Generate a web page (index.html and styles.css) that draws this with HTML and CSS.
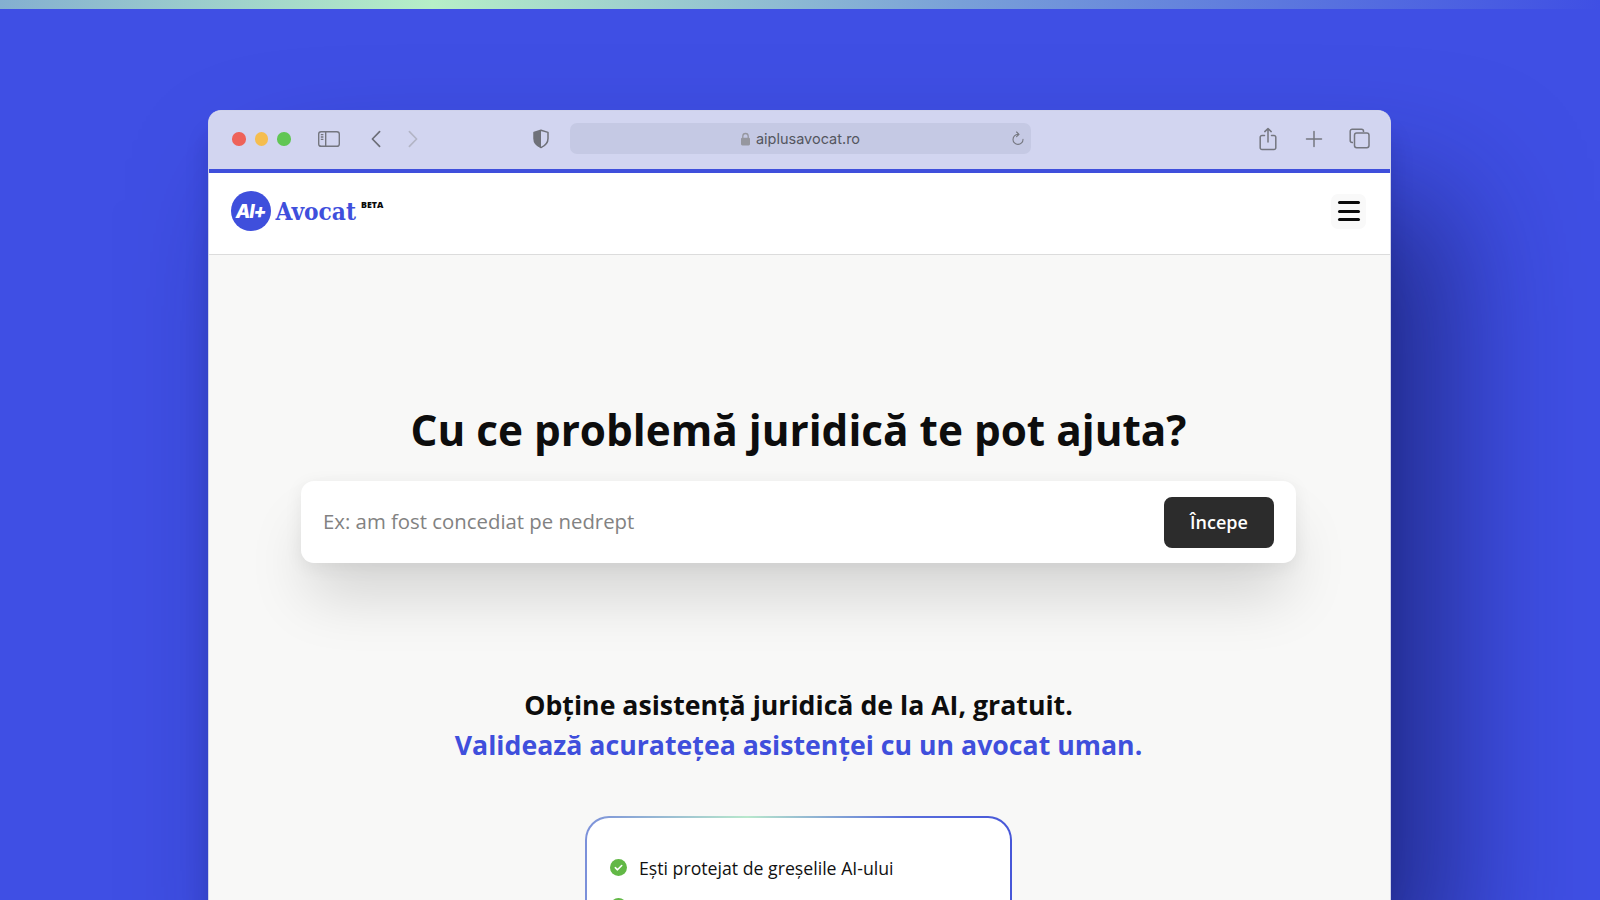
FILE: index.html
```html
<!DOCTYPE html>
<html lang="ro">
<head>
<meta charset="utf-8">
<title>AI+ Avocat</title>
<link rel="stylesheet" href="styles.css">
</head>
<body>
<div class="topbar"></div>
<div class="window">
  <div class="chrome">
    <div class="lights"><span class="dot red"></span><span class="dot yellow"></span><span class="dot green"></span></div>
    <svg class="ic sidebar" width="24" height="18" viewBox="0 0 24 18" fill="none" stroke="#74767f" stroke-width="1.4"><rect x="1.7" y="1.7" width="20.6" height="14.6" rx="2.4"/><path d="M8.7 1.7v14.6M3.8 4.6h2.6M3.8 7h2.6M3.8 9.4h2.6" /></svg>
    <svg class="ic back" width="12" height="18" viewBox="0 0 12 18" fill="none" stroke="#6c6e78" stroke-width="1.7" stroke-linecap="round" stroke-linejoin="round"><path d="M9.6 1.6 2.4 9l7.2 7.4"/></svg>
    <svg class="ic forward" width="12" height="18" viewBox="0 0 12 18" fill="none" stroke="#b3b5c6" stroke-width="1.7" stroke-linecap="round" stroke-linejoin="round"><path d="M2.4 1.6 9.6 9l-7.2 7.4"/></svg>
    <svg class="ic shield" width="18" height="20" viewBox="0 0 18 20"><path d="M9 1.2 2 3.4v6.200c0 4.200 3 7.300 7 9 4-1.700 7-4.800 7-9V3.400z" fill="none" stroke="#6f7179" stroke-width="1.500" stroke-linejoin="round"/><path d="M9 1.200 2 3.400v6.200c0 4.200 3 7.300 7 9z" fill="#6f7179"/></svg>
    <div class="url">
      <svg class="lock" width="11" height="14" viewBox="0 0 11 14"><path d="M2.800 6V4.200a2.700 2.700 0 0 1 5.400 0V6" fill="none" stroke="#96979f" stroke-width="1.300"/><rect x="1" y="5.800" width="9" height="7.600" rx="1.300" fill="#96979f"/></svg>
      <span class="url-text">aiplusavocat.ro</span>
      <svg class="reload" width="14" height="16" viewBox="0 0 14 16" fill="none" stroke="#74767f" stroke-width="1.100" stroke-linecap="round" stroke-linejoin="round"><path d="M7 3.400a5 5 0 1 0 5 5"/><path d="M5.600 1 8 3.400 5.600 5.600"/></svg>
    </div>
    <svg class="ic share" width="18" height="24" viewBox="0 0 18 24" fill="none" stroke="#74767f" stroke-width="1.500" stroke-linecap="round" stroke-linejoin="round"><path d="M5.500 8.500H3a1.800 1.800 0 0 0-1.800 1.800v10.400A1.800 1.800 0 0 0 3 22.500h12a1.800 1.800 0 0 0 1.800-1.800V10.300A1.800 1.800 0 0 0 15 8.500h-2.500"/><path d="M9 15V1.500M5.800 4.600 9 1.500l3.200 3.100"/></svg>
    <svg class="ic plus" width="18" height="18" viewBox="0 0 18 18" fill="none" stroke="#74767f" stroke-width="1.500" stroke-linecap="round"><path d="M9 1.500v15M1.500 9h15"/></svg>
    <svg class="ic tabs" width="21" height="21" viewBox="0 0 21 21" fill="none" stroke="#74767f" stroke-width="1.500"><path d="M4 14.500H3.200A2 2 0 0 1 1.200 12.500V3.200a2 2 0 0 1 2-2h9.300a2 2 0 0 1 2 2V4"/><rect x="5.500" y="5" width="14.500" height="14.800" rx="2.200"/></svg>
  </div>
  <div class="accent"></div>
  <header class="header">
    <div class="brand">
      <span class="logo-mark">AI+</span>
      <span class="logo-name">Avocat</span>
      <sup class="beta">BETA</sup>
    </div>
    <button class="menu" aria-label="Meniu"><span></span><span></span><span></span></button>
  </header>
  <main class="main">
    <h1 class="title">Cu ce problemă juridică te pot ajuta?</h1>
    <div class="search">
      <span class="placeholder">Ex: am fost concediat pe nedrept</span>
      <button class="start">Începe</button>
    </div>
    <h2 class="lead">Obține asistență juridică de la AI, gratuit.<br><span class="lead-blue">Validează acuratețea asistenței cu un avocat uman.</span></h2>
    <div class="card">
      <ul class="list">
        <li class="item"><svg class="check" width="17" height="17" viewBox="0 0 17 17"><circle cx="8.500" cy="8.500" r="8.500" fill="#62b846"/><path d="M5.300 8.700 7.500 10.800 11.700 6.500" fill="none" stroke="#fff" stroke-width="1.600" stroke-linecap="round" stroke-linejoin="round"/></svg>Ești protejat de greșelile AI-ului</li>
        <li class="item"><svg class="check" width="17" height="17" viewBox="0 0 17 17"><circle cx="8.500" cy="8.500" r="8.500" fill="#62b846"/></svg></li>
      </ul>
    </div>
  </main>
</div>
</body>
</html>
```

FILE: styles.css
```css
* { box-sizing: border-box; }
html, body { margin: 0; height: 100%; }
body {
  height: 900px;
  overflow: hidden;
  background: #3f4fe4;
  font-family: "Open Sans", sans-serif;
  color: #0d0d0d;
}
.topbar {
  height: 9px;
  background: linear-gradient(90deg, #84afd0 0%, #b6efc7 27%, #79a0d8 60%, #3f4fe4 100%);
}
.window {
  width: 1183px;
  height: 791px;
  margin: 100.500px 0 0 208px;
  border: 1.500px solid #cfd2ea;
  border-bottom: 0;
  border-radius: 13px 13px 0 0;
  background: #f8f8f7;
  box-shadow: 60px 90px 130px rgba(18, 24, 90, 0.62), 0 24px 22px rgba(18, 24, 90, 0.2);
  overflow: hidden;
}
.chrome {
  display: flex;
  align-items: center;
  height: 58px;
  padding: 0 0 1.500px 23px;
  background: #d2d5f0;
}
.lights { display: flex; gap: 9px; }
.dot { width: 13.500px; height: 13.500px; border-radius: 50%; }
.red { background: #ee6259; }
.yellow { background: #f5bd4f; }
.green { background: #61c654; }
.ic { flex: none; }
.sidebar { margin-left: 26.500px; }
.back { margin-left: 28.500px; }
.forward { margin-left: 25px; }
.shield { margin-left: 113px; }
.url {
  display: flex;
  align-items: center;
  justify-content: center;
  position: relative;
  width: 461px;
  height: 31px;
  margin-left: 20px;
  border-radius: 7px;
  background: #c5c9e4;
  font-family: Inter, sans-serif;
  font-size: 14.500px;
  color: #54565f;
}
.lock { margin-right: 5px; }
.reload { position: absolute; right: 6px; top: 8px; }
.share { margin-left: 228px; }
.plus { margin-left: 28px; }
.tabs { margin-left: 26px; }
.accent { height: 4px; background: #3f4fdc; }
.header {
  display: flex;
  align-items: center;
  justify-content: space-between;
  height: 82px;
  padding: 0 24px 4px 21.500px;
  background: #fff;
  border-bottom: 1px solid #dcdcdc;
}
.brand { display: flex; align-items: center; }
.logo-mark {
  display: flex;
  align-items: center;
  justify-content: center;
  width: 40px;
  height: 40px;
  border-radius: 50%;
  background: #3f4fdc;
  color: #fff;
  font-family: Inter, sans-serif;
  font-weight: 800;
  font-style: italic;
  font-size: 19px;
  letter-spacing: -1.200px;
}
.logo-name {
  margin: 2px 0 0 5px;
  font-family: "DejaVu Serif Condensed", "Liberation Serif", serif;
  font-weight: 700;
  font-size: 24.200px;
  line-height: 40px;
  color: #3f4fdc;
}
.beta {
  align-self: flex-start;
  margin: 8px 0 0 5px;
  font-weight: 800;
  font-size: 8.800px;
  line-height: 14px;
  color: #0a0a0a;
}
.menu {
  display: flex;
  flex-direction: column;
  align-items: center;
  justify-content: center;
  gap: 5.500px;
  width: 35px;
  height: 35px;
  padding: 0;
  border: 0;
  border-radius: 7px;
  background: #f9f9f9;
}
.menu span { width: 22px; height: 3px; border-radius: 2px; background: #0a0a0a; }
.main {
  display: flex;
  flex-direction: column;
  align-items: center;
  padding: 144px 2px 0 0;
}
.title {
  margin: 0;
  font-size: 42.300px;
  font-weight: 700;
  line-height: 62px;
  color: #0d0d0d;
}
.search {
  display: flex;
  align-items: center;
  justify-content: space-between;
  width: 995px;
  height: 82px;
  margin-top: 20px;
  padding: 1px 22px 0;
  border-radius: 13px;
  background: #fff;
  box-shadow: 0 40px 60px -8px rgba(0, 0, 0, 0.15), 0 4px 18px rgba(0, 0, 0, 0.07);
}
.placeholder { margin-top: -2px; font-size: 20.350px; font-weight: 500; color: #828282; }
.start {
  width: 110px;
  height: 51px;
  border: 0;
  border-radius: 8px;
  background: #2c2c2c;
  color: #fff;
  font-family: "Open Sans", sans-serif;
  font-size: 18px;
  font-weight: 600;
}
.lead {
  margin: 122px 0 0;
  text-align: center;
  font-size: 26.700px;
  font-weight: 700;
  line-height: 40px;
  color: #0d0d0d;
}
.lead-blue { color: #3f4fdc; }
.card {
  width: 427px;
  height: 200px;
  margin-top: 51px;
  padding: 38px 23px;
  border: 2.500px solid transparent;
  border-radius: 24px;
  background:
    linear-gradient(#fff, #fff) padding-box,
    linear-gradient(90deg, #7b90da 0%, #b8e8cc 38%, #5a6fdc 75%, #4757d8 100%) border-box;
}
.list { margin: 0; padding: 0; list-style: none; }
.item {
  display: flex;
  align-items: center;
  gap: 12px;
  height: 24px;
  margin-bottom: 14.500px;
  font-size: 17.700px;
  color: #111;
}
.check { flex: none; }
```
